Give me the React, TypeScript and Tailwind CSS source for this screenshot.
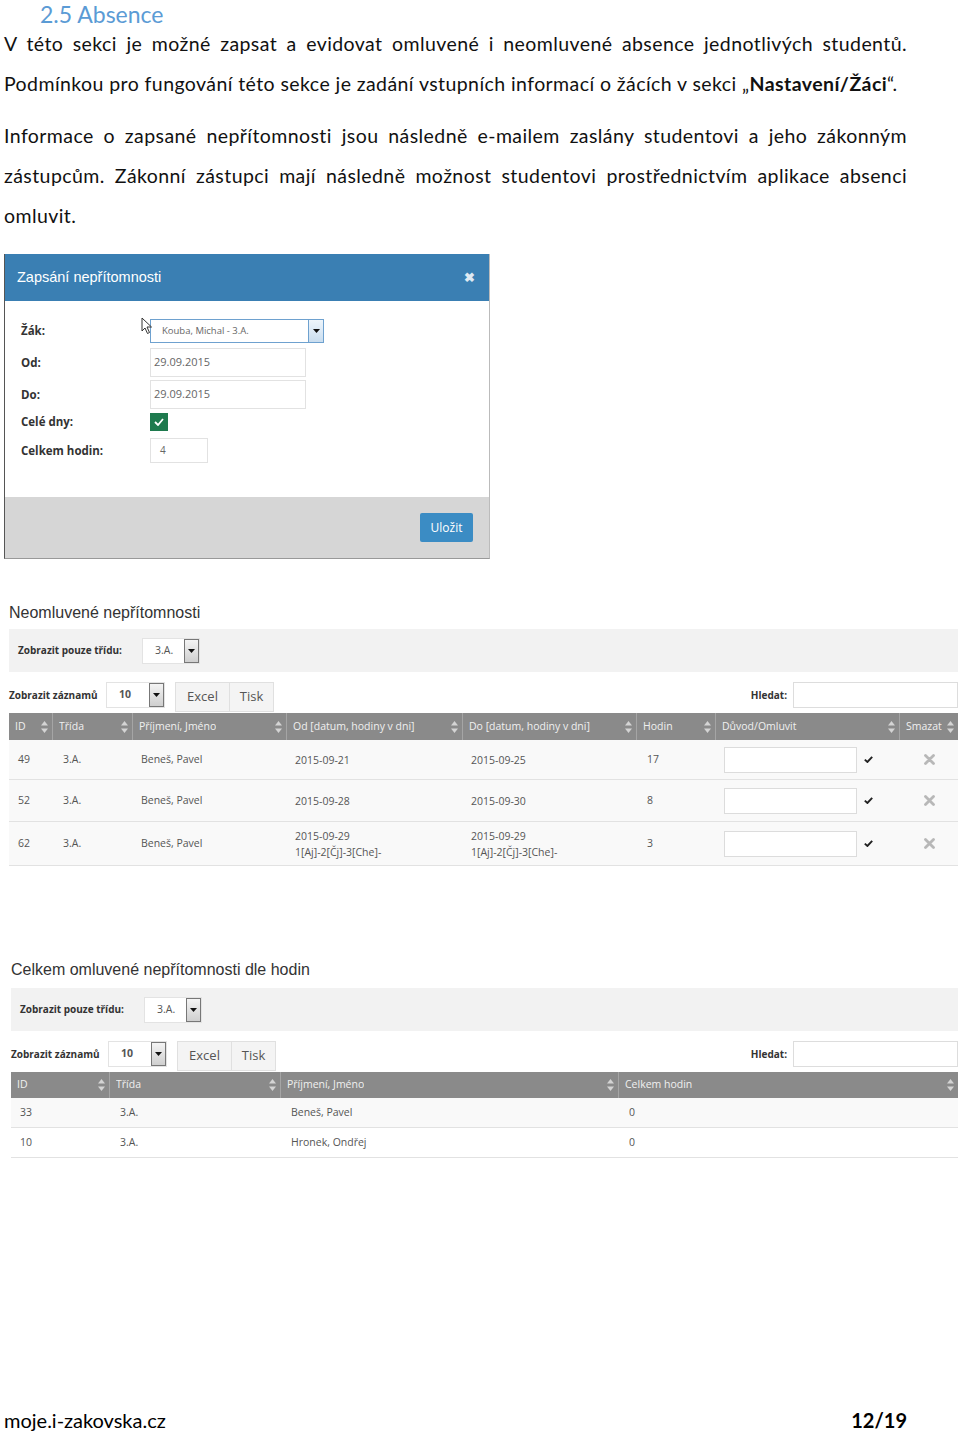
import React from 'react';

const body = { fontFamily: 'Lato, "Open Sans", sans-serif' };
const ui = { fontFamily: '"Open Sans", "Liberation Sans", sans-serif' };
const arial = { fontFamily: '"Liberation Sans", Arial, sans-serif' };

const SortIcon: React.FC = () => (
  <svg width="7" height="12" viewBox="0 0 7 12" className="shrink-0">
    <path d="M3.5 0 L7 4.5 H0 Z" fill="#d4d4d4" />
    <path d="M3.5 12 L7 7.5 H0 Z" fill="#d4d4d4" />
  </svg>
);

const Caret: React.FC = () => (
  <svg width="7" height="4" viewBox="0 0 7 4">
    <path d="M0 0 H7 L3.5 4 Z" fill="#111" />
  </svg>
);

const MiniSelect: React.FC<{ value: string; width: number; bold?: boolean }> = ({
  value,
  width,
  bold,
}) => (
  <div className="flex h-[26px] border border-[#e3e3e3] bg-white" style={{ width }}>
    <div
      className={`flex flex-1 items-center pl-3 text-[10.5px] text-[#555] ${bold ? 'font-bold text-[#333]' : ''}`}
    >
      {value}
    </div>
    <div className="flex w-[15px] items-center justify-center border border-[#777] bg-gradient-to-b from-[#f4f4f4] to-[#cfcfcf]">
      <Caret />
    </div>
  </div>
);

const Toolbar: React.FC = () => (
  <>
    <div className="flex h-[43px] items-center bg-[#f2f2f2] pl-[9px]">
      <span className="w-[124px] text-[10px] font-bold text-[#333]">Zobrazit pouze třídu:</span>
      <MiniSelect value="3.A." width={58} />
    </div>
    <div className="mt-[10px] flex h-[30px] items-start">
      <span className="mt-[6px] w-[97px] text-[10px] font-bold text-[#333]">Zobrazit záznamů</span>
      <MiniSelect value="10" width={59} bold />
      <div className="ml-[10px] flex h-[30px] border border-[#e0e0e0] bg-[#f4f4f4] text-[13px] text-[#555]">
        <span className="flex w-[54px] items-center justify-center border-r border-[#e0e0e0]">Excel</span>
        <span className="flex w-[43px] items-center justify-center">Tisk</span>
      </div>
      <div className="ml-auto flex items-center">
        <span className="mr-[6px] text-[10px] font-bold text-[#333]">Hledat:</span>
        <div className="h-[26px] w-[165px] border border-[#ddd] bg-white" />
      </div>
    </div>
  </>
);

const HeadCell: React.FC<{ label: string; width: number; last?: boolean }> = ({ label, width, last }) => (
  <div
    className={`flex items-center justify-between pl-[6px] pr-[4px] ${last ? '' : 'border-r border-[#a5a5a5]'}`}
    style={{ width }}
  >
    <span className="truncate text-[10.5px] text-[#f0f0f0]">{label}</span>
    <SortIcon />
  </div>
);

const App: React.FC = () => {
  const unexcused = [
    { id: '49', cls: '3.A.', name: 'Beneš, Pavel', od: '2015-09-21', doo: '2015-09-25', h: '17', h2: 40 },
    { id: '52', cls: '3.A.', name: 'Beneš, Pavel', od: '2015-09-28', doo: '2015-09-30', h: '8', h2: 42 },
    { id: '62', cls: '3.A.', name: 'Beneš, Pavel', od: '2015-09-29', doo: '2015-09-29', h: '3', h2: 44, sub: true },
  ];
  const cols1 = [44, 80, 154, 176, 174, 79, 184, 58];

  return (
    <div className="relative flex h-[1434px] w-[960px] flex-col overflow-hidden bg-white text-black">
      {/* text */}
      <div className="pl-[4px] pr-[53px]" style={body}>
        <h1 className="h-[24px] pl-[36px] text-[23px] leading-[28px] text-[#5b9bd5]">2.5 Absence</h1>
        <div className="text-[19.5px] leading-[40px] tracking-[0.42px] text-[#111]">
          <p className="text-justify [text-align-last:justify]">
            V této sekci je možné zapsat a evidovat omluvené i neomluvené absence jednotlivých studentů.
          </p>
          <p>
            Podmínkou pro fungování této sekce je zadání vstupních informací o žácích v sekci „
            <b>Nastavení/Žáci</b>“.
          </p>
          <p className="mt-[12px] text-justify [text-align-last:justify]">
            Informace o zapsané nepřítomnosti jsou následně e-mailem zaslány studentovi a jeho zákonným
          </p>
          <p className="text-justify [text-align-last:justify]">
            zástupcům. Zákonní zástupci mají následně možnost studentovi prostřednictvím aplikace absenci
          </p>
          <p>omluvit.</p>
        </div>
      </div>

      {/* dialog */}
      <div className="relative ml-[4px] mt-[18px] flex h-[305px] w-[486px] flex-col border-l border-l-[#555] border-r border-r-[#bbb] border-b border-b-[#999]" style={ui}>
        <div className="flex h-[47px] items-center justify-between bg-[#3a7fb3] pl-[12px] pr-[14px]">
          <span className="text-[14.5px] text-white" style={arial}>Zapsání nepřítomnosti</span>
          <span className="text-[13px] font-bold text-[#dfe9f2]">✖</span>
        </div>
        <div className="flex h-[196px] flex-col bg-white pl-[16px] pt-[18px]">
          <div className="flex h-[24px] items-center">
            <span className="w-[129px] text-[11.5px] font-bold text-[#333]">Žák:</span>
            <div className="flex h-[24px] w-[174px] border border-[#6ea1cf] bg-white">
              <span className="flex flex-1 items-center pl-[11px] text-[9.5px] text-[#666]">Kouba, Michal - 3.A.</span>
              <div className="flex w-[15px] items-center justify-center border-l border-[#6ea1cf] bg-gradient-to-b from-[#eef5fb] to-[#c9ddef]">
                <Caret />
              </div>
            </div>
          </div>
          <div className="mt-[5px] flex h-[29px] items-center">
            <span className="w-[129px] text-[11.5px] font-bold text-[#333]">Od:</span>
            <div className="flex h-[29px] w-[156px] items-center border border-[#e2e2e2] pl-[3px] text-[11px] text-[#666]">29.09.2015</div>
          </div>
          <div className="mt-[3px] flex h-[29px] items-center">
            <span className="w-[129px] text-[11.5px] font-bold text-[#333]">Do:</span>
            <div className="flex h-[29px] w-[156px] items-center border border-[#e2e2e2] pl-[3px] text-[11px] text-[#666]">29.09.2015</div>
          </div>
          <div className="mt-[4px] flex h-[18px] items-center">
            <span className="w-[129px] text-[11.5px] font-bold text-[#333]">Celé dny:</span>
            <div className="flex h-[18px] w-[18px] items-center justify-center bg-[#1e7a4e]">
              <svg width="10" height="8" viewBox="0 0 10 8">
                <path d="M1 4 L4 7 L9 1" stroke="white" strokeWidth="1.8" fill="none" />
              </svg>
            </div>
          </div>
          <div className="mt-[7px] flex h-[25px] items-center">
            <span className="w-[129px] text-[11.5px] font-bold text-[#333]">Celkem hodin:</span>
            <div className="flex h-[25px] w-[58px] items-center border border-[#e2e2e2] pl-[9px] text-[10px] text-[#666]">4</div>
          </div>
        </div>
        <div className="flex flex-1 items-start justify-end bg-[#d6d6d6] pr-[16px] pt-[16px]">
          <div className="flex h-[29px] w-[53px] items-center justify-center rounded-[2px] bg-[#3b8cc4] text-[12px] text-white">
            Uložit
          </div>
        </div>
        <svg className="absolute left-[136px] top-[63px]" width="12" height="18" viewBox="0 0 12 18">
          <path d="M1 1 L1 14 L4 11 L6.5 16.5 L8.5 15.5 L6 10 L10.5 10 Z" fill="white" stroke="#333" strokeWidth="1" />
        </svg>
      </div>

      {/* unexcused */}
      <div className="ml-[9px] mt-[45px] w-[949px]" style={ui}>
        <h2 className="h-[17px] text-[16px] leading-[17px] text-[#333]" style={arial}>Neomluvené nepřítomnosti</h2>
        <div className="mt-[8px]">
          <Toolbar />
        </div>
        <div className="mt-[1px] flex h-[27px] bg-[#8a8a8a]">
          {['ID', 'Třída', 'Příjmení, Jméno', 'Od [datum, hodiny v dni]', 'Do [datum, hodiny v dni]', 'Hodin', 'Důvod/Omluvit', 'Smazat'].map(
            (l, i) => (
              <HeadCell key={l} label={l} width={cols1[i]} last={i === cols1.length - 1} />
            )
          )}
        </div>
        {unexcused.map((r) => (
          <div
            key={r.id}
            className="flex items-center border-b border-[#e2e2e2] bg-[#f9f9f9] text-[10.5px] text-[#555]"
            style={{ height: r.h2 }}
          >
            <span className="pl-[9px]" style={{ width: cols1[0] }}>{r.id}</span>
            <span className="pl-[10px]" style={{ width: cols1[1] }}>{r.cls}</span>
            <span className="pl-[8px]" style={{ width: cols1[2] }}>{r.name}</span>
            <span className="pl-[8px] leading-[16px]" style={{ width: cols1[3] }}>
              {r.od}
              {r.sub && <br />}
              {r.sub && '1[Aj]-2[Čj]-3[Che]-'}
            </span>
            <span className="pl-[8px] leading-[16px]" style={{ width: cols1[4] }}>
              {r.doo}
              {r.sub && <br />}
              {r.sub && '1[Aj]-2[Čj]-3[Che]-'}
            </span>
            <span className="pl-[10px]" style={{ width: cols1[5] }}>{r.h}</span>
            <div className="flex items-center" style={{ width: cols1[6] }}>
              <div className="ml-[8px] h-[26px] w-[133px] border border-[#dcdcdc] bg-white" />
              <svg className="ml-[7px]" width="9" height="7" viewBox="0 0 9 7">
                <path d="M0.8 3.6 L3.4 6 L8.2 0.8" stroke="#222" strokeWidth="1.9" fill="none" />
              </svg>
            </div>
            <div className="flex justify-center" style={{ width: cols1[7] }}>
              <svg width="11" height="11" viewBox="0 0 11 11">
                <path d="M1.5 1.5 L9.5 9.5 M9.5 1.5 L1.5 9.5" stroke="#b8b8b8" strokeWidth="2.8" strokeLinecap="round" />
              </svg>
            </div>
          </div>
        ))}
      </div>

      {/* excused */}
      <div className="ml-[11px] mt-[95px] w-[947px]" style={ui}>
        <h2 className="h-[17px] text-[16px] leading-[17px] text-[#333]" style={arial}>Celkem omluvené nepřítomnosti dle hodin</h2>
        <div className="mt-[10px]">
          <Toolbar />
        </div>
        <div className="mt-[1px] flex h-[26px] bg-[#8a8a8a]">
          <HeadCell label="ID" width={99} />
          <HeadCell label="Třída" width={171} />
          <HeadCell label="Příjmení, Jméno" width={338} />
          <HeadCell label="Celkem hodin" width={339} last />
        </div>
        {[
          { id: '33', cls: '3.A.', name: 'Beneš, Pavel', h: '0' },
          { id: '10', cls: '3.A.', name: 'Hronek, Ondřej', h: '0' },
        ].map((r, i) => (
          <div
            key={r.id}
            className={`flex h-[30px] items-center border-b border-[#e2e2e2] text-[10.5px] text-[#555] ${i === 0 ? 'bg-[#f9f9f9]' : 'bg-white'}`}
          >
            <span className="w-[99px] pl-[9px]">{r.id}</span>
            <span className="w-[171px] pl-[10px]">{r.cls}</span>
            <span className="w-[338px] pl-[10px]">{r.name}</span>
            <span className="w-[339px] pl-[10px]">{r.h}</span>
          </div>
        ))}
      </div>

      {/* footer */}
      <div className="mt-auto mb-0 flex w-[907px] items-center justify-between pl-[4px] text-[20px] leading-[28px]" style={body}>
        <span>moje.i-zakovska.cz</span>
        <b>12/19</b>
      </div>
    </div>
  );
};

export default App;
